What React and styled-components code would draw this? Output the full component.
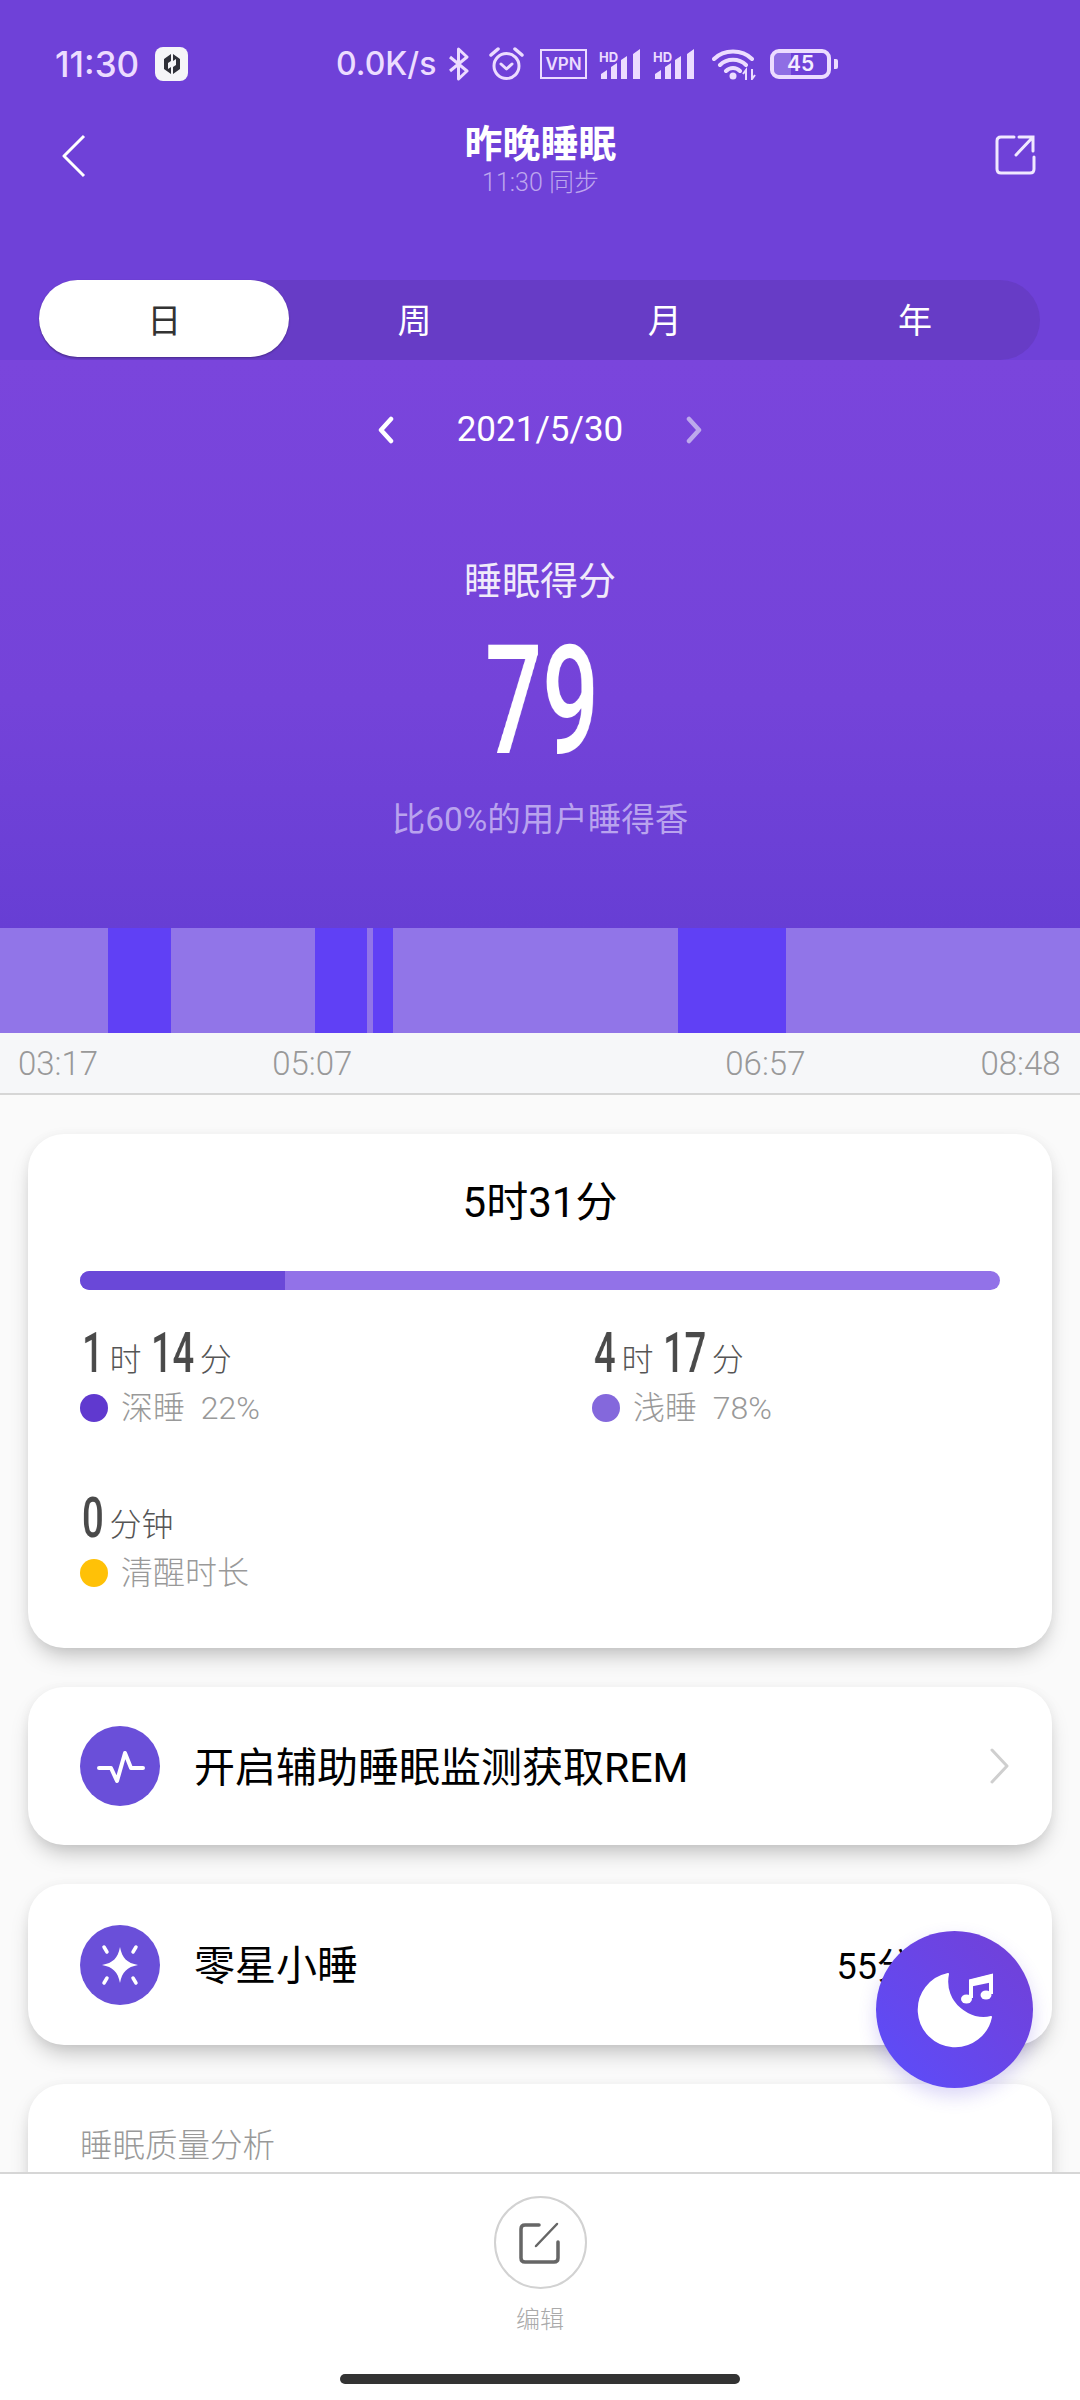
import React from 'react';
import styled, { createGlobalStyle } from 'styled-components';

const GlobalStyle = createGlobalStyle`
  html, body {
    margin: 0;
    padding: 0;
    background: #fafafa;
  }
  * {
    box-sizing: border-box;
  }
`;

const SANS = `Roboto, "Noto Sans CJK SC", sans-serif`;
const STATUS = `Inter, "Noto Sans CJK SC", sans-serif`;
const STATUS_COLOR = '#ecdcff';

const Page = styled.div`
  position: relative;
  width: 1080px;
  height: 2400px;
  display: flex;
  flex-direction: column;
  overflow: hidden;
  font-family: ${SANS};
  background: #fafafa;
`;

const TopBand = styled.div`
  height: 360px;
  flex: none;
  background: #6f41d8;
  display: flex;
  flex-direction: column;
`;

const StatusBar = styled.div`
  height: 34px;
  margin-top: 47px;
  padding-left: 55px;
  display: flex;
  align-items: center;
  font-family: ${STATUS};
  color: ${STATUS_COLOR};
`;

const Clock = styled.span`
  width: 100px;
  font-size: 35px;
  font-weight: 500;
  line-height: 34px;
`;

const AppBadge = styled.div`
  width: 33px;
  height: 34px;
  border-radius: 8px;
  background: #f5f5f8;
  display: flex;
  align-items: center;
  justify-content: center;
`;

const Speed = styled.span`
  margin-left: 148px;
  width: 112px;
  font-size: 32px;
  font-weight: 500;
  line-height: 34px;
`;

const StatusIcon = styled.svg`
  flex: none;
  margin-left: ${(p) => p.$gap || 0}px;
`;

const VpnBox = styled.div`
  width: 47px;
  height: 30px;
  margin-left: 16px;
  border: 2px solid ${STATUS_COLOR};
  display: flex;
  align-items: center;
  justify-content: center;
  font-size: 17px;
  font-weight: 600;
`;

const Battery = styled.div`
  position: relative;
  width: 61px;
  height: 30px;
  margin-left: 14px;
  border: 4px solid ${STATUS_COLOR};
  border-radius: 9px;
  display: flex;
  align-items: center;
  justify-content: center;
  font-size: 21px;
  font-weight: 600;
  line-height: 22px;
  background: linear-gradient(90deg, #8f6ee4 0, #8f6ee4 32%, transparent 32%);
  background-clip: padding-box;
  color: #f4ecff;
`;

const BatteryNub = styled.div`
  width: 4px;
  height: 10px;
  margin-left: 3px;
  border-radius: 0 2px 2px 0;
  background: ${STATUS_COLOR};
`;

const NavBar = styled.div`
  height: 80px;
  margin-top: 39px;
  padding: 14px 43px 0 62px;
  display: flex;
  align-items: flex-start;
  justify-content: space-between;
`;

const NavTitleGroup = styled.div`
  display: flex;
  flex-direction: column;
  align-items: center;
  margin-top: -14px;
`;

const NavTitle = styled.div`
  color: #fff;
  font-size: 38px;
  line-height: 48px;
  font-weight: 700;
`;

const NavSub = styled.div`
  color: #bda6ee;
  font-size: 25px;
  line-height: 30px;
  font-weight: 300;
`;

const TabTrack = styled.div`
  margin: 80px 40px 0 39px;
  height: 80px;
  display: grid;
  grid-template-columns: repeat(4, 1fr);
  border-radius: 40px;
  background: #673cc6;
`;

const Tab = styled.div`
  height: ${(p) => (p.$active ? '77px' : '80px')};
  padding-bottom: ${(p) => (p.$active ? '0' : '3px')};
  border-radius: 40px;
  display: flex;
  align-items: center;
  justify-content: center;
  font-size: 34px;
  color: ${(p) => (p.$active ? '#333' : '#fff')};
  background: ${(p) => (p.$active ? '#fff' : 'transparent')};
  box-shadow: ${(p) => (p.$active ? '0 1px 2px rgba(0, 0, 0, 0.3)' : 'none')};
`;

const ScoreBand = styled.div`
  height: 568px;
  flex: none;
  background: linear-gradient(180deg, #7a45dc 0%, #7443d9 60%, #673ed4 100%);
  display: flex;
  flex-direction: column;
  align-items: center;
`;

const DateRow = styled.div`
  margin-top: 50px;
  height: 40px;
  display: flex;
  align-items: center;
  color: #fff;
  font-size: 35px;
`;

const DateText = styled.span`
  margin: 0 62px;
  line-height: 40px;
`;

const ScoreLabel = styled.div`
  margin-top: 107px;
  color: #f0eafa;
  font-size: 38px;
  line-height: 48px;
`;

const Condensed = styled.span`
  display: inline-block;
  width: ${(p) => p.$n * p.$unit}em;
  transform: scaleX(${(p) => p.$scale});
  transform-origin: left center;
  white-space: nowrap;
  font-family: Roboto, sans-serif;
  will-change: transform;
`;

const ScoreValue = styled.div`
  margin-top: 21px;
  height: 150px;
  color: #fff;
  font-size: 152px;
  line-height: 150px;
  font-weight: 500;
`;

const ScoreCompare = styled.div`
  margin-top: 22px;
  color: #b9a3ee;
  font-size: 33.5px;
  line-height: 44px;
`;

const Chart = styled.div`
  height: 105px;
  flex: none;
  display: flex;
`;

const ChartSegment = styled.div`
  width: ${(p) => p.$w}px;
  flex: ${(p) => (p.$grow ? '1' : 'none')};
  background: ${(p) => (p.$deep ? '#6040f5' : '#9175e8')};
`;

const TimeAxis = styled.div`
  height: 62px;
  flex: none;
  padding: 0 18px;
  display: flex;
  align-items: center;
  background: #f6f7f9;
  border-bottom: 2px solid #d6d6d6;
`;

const TimeLabel = styled.span`
  margin-left: ${(p) => p.$gap || 0}px;
  font-size: 33px;
  font-weight: 300;
  color: #999;
`;

const Scroller = styled.div`
  flex: 1;
  min-height: 0;
  overflow: hidden;
  padding: 39px 28px 0;
  display: flex;
  flex-direction: column;
  gap: 39px;
  background: #fafafa;
`;

const Card = styled.div`
  flex: none;
  height: ${(p) => p.$h}px;
  border-radius: 36px;
  background: #fff;
  box-shadow: 0 12px 22px -6px rgba(0, 0, 0, 0.26), 0 0 12px rgba(0, 0, 0, 0.04);
`;

const SummaryCard = styled(Card)`
  padding: 45px 52px 0;
`;

const TotalTime = styled.div`
  text-align: center;
  color: #000;
  font-size: 42px;
  line-height: 48px;
`;

const StageBar = styled.div`
  margin-top: 44px;
  height: 19px;
  border-radius: 10px;
  overflow: hidden;
  background: #9272e8;
`;

const StageFill = styled.div`
  width: ${(p) => p.$w}px;
  height: 100%;
  background: #6a48d8;
`;

const StatGrid = styled.div`
  margin-top: 32px;
  display: grid;
  grid-template-columns: 512px 1fr;
  row-gap: 61px;
`;

const Stat = styled.div`
  display: flex;
  flex-direction: column;
`;

const StatValue = styled.div`
  height: 62px;
  display: flex;
  align-items: flex-end;
  color: #4a4a4a;
`;

const StatNumber = styled.div`
  font-size: 56px;
  line-height: 62px;
  font-weight: 500;
  margin-left: ${(p) => p.$gap || 2}px;
`;

const StatUnit = styled.span`
  margin-left: ${(p) => p.$gap || 6}px;
  font-size: 32px;
  line-height: 48px;
  color: #555;
  font-weight: 300;
`;

const StatLegend = styled.div`
  margin-top: 6px;
  display: flex;
  align-items: center;
  gap: 13px;
  color: #999;
  font-size: 32px;
  line-height: 36px;
  font-weight: 300;
  word-spacing: 8px;
`;

const LegendDot = styled.span`
  width: 28px;
  height: 28px;
  border-radius: 50%;
  background: ${(p) => p.$color};
`;

const RowCard = styled(Card)`
  padding: 0 42px 0 52px;
  display: flex;
  align-items: center;
`;

const RowIcon = styled.div`
  width: 80px;
  height: 80px;
  flex: none;
  border-radius: 50%;
  background: #6a4fd9;
  display: flex;
  align-items: center;
  justify-content: center;
`;

const RowText = styled.span`
  flex: 1;
  margin-left: 34px;
  padding-bottom: 5px;
  color: #000;
  font-size: 41px;
`;

const RowValue = styled.span`
  color: #000;
  font-size: 36px;
  margin-right: 61px;
  padding-bottom: 3px;
`;

const SectionCard = styled(Card)`
  padding: 40px 52px 0;
`;

const SectionTitle = styled.div`
  color: #999;
  font-size: 32.5px;
  line-height: 44px;
  font-weight: 300;
`;

const Fab = styled.div`
  position: absolute;
  left: 876px;
  top: 1931px;
  width: 157px;
  height: 157px;
  border-radius: 50%;
  background: linear-gradient(45deg, #5a4dfb 0%, #6a45e6 55%, #7240d6 100%);
  box-shadow: 0 8px 18px rgba(90, 70, 220, 0.22);
`;

const BottomBar = styled.div`
  height: 228px;
  flex: none;
  border-top: 2px solid #d6d6d6;
  background: #fff;
  display: flex;
  flex-direction: column;
  align-items: center;
  padding-top: 22px;
`;

const EditCircle = styled.div`
  width: 93px;
  height: 93px;
  border-radius: 50%;
  border: 2px solid #d2d2d2;
  display: flex;
  align-items: center;
  justify-content: center;
`;

const EditLabel = styled.div`
  margin-top: 15px;
  color: #aaa;
  font-size: 24px;
  line-height: 32px;
  font-weight: 300;
`;

const HomeBar = styled.div`
  margin-top: 38px;
  width: 400px;
  height: 10px;
  border-radius: 5px;
  background: #333;
`;

const HdSignal = ({ gap }) => (
  <StatusIcon $gap={gap} width="43" height="32" viewBox="0 0 43 32">
    <text x="0" y="14" fontFamily="Inter, sans-serif" fontSize="13" fontWeight="700" fill={STATUS_COLOR}>HD</text>
    <path d="M2 31V26L8 22V31ZM12 31V19L18 15V31ZM22 31V12L28 8V31ZM34 31V6L41 1V31Z" fill={STATUS_COLOR} />
  </StatusIcon>
);

const TABS = ['日', '周', '月', '年'];
const SEGMENTS = [
  { w: 108 },
  { w: 63, deep: true },
  { w: 144 },
  { w: 52, deep: true },
  { w: 6 },
  { w: 20, deep: true },
  { w: 285 },
  { w: 108, deep: true },
  { grow: true },
];

const App = () => (
  <Page>
    <GlobalStyle />
    <TopBand>
      <StatusBar>
        <Clock>11:30</Clock>
        <AppBadge>
          <svg width="20" height="24" viewBox="0 0 20 24">
            <path d="M9 2V9L6 11V17L9 15V22L2 17V7ZM11 2L18 7V17L11 22V15L14 13V7L11 9Z" fill="#2f3038" />
          </svg>
        </AppBadge>
        <Speed>0.0K/s</Speed>
        <StatusIcon width="22" height="34" viewBox="0 0 22 34">
          <path d="M2 10L19 24L10.5 32V2L19 10L2 24" fill="none" stroke={STATUS_COLOR} strokeWidth="3" strokeLinejoin="round" />
        </StatusIcon>
        <StatusIcon $gap={19} width="35" height="34" viewBox="0 0 35 34">
          <circle cx="17.5" cy="19" r="12.5" fill="none" stroke={STATUS_COLOR} strokeWidth="3" />
          <path d="M12 17L17.5 22L23 17" fill="none" stroke={STATUS_COLOR} strokeWidth="3" strokeLinecap="round" strokeLinejoin="round" />
          <path d="M2 8L9 2M33 8L26 2" fill="none" stroke={STATUS_COLOR} strokeWidth="3.5" strokeLinecap="round" />
        </StatusIcon>
        <VpnBox>VPN</VpnBox>
        <HdSignal gap={12} />
        <HdSignal gap={11} />
        <StatusIcon $gap={16} width="44" height="32" viewBox="0 0 44 32">
          <path d="M2 11C12 1 30 1 40 11M8 17C15 10 27 10 34 17M14 23C18 19 24 19 28 23" fill="none" stroke={STATUS_COLOR} strokeWidth="4" strokeLinecap="round" />
          <circle cx="21" cy="28" r="3.5" fill={STATUS_COLOR} />
          <path d="M34 32V22L31 26M40 21V31L43 27" fill="none" stroke={STATUS_COLOR} strokeWidth="2" />
        </StatusIcon>
        <Battery>45</Battery>
        <BatteryNub />
      </StatusBar>
      <NavBar>
        <svg width="24" height="44" viewBox="0 0 24 44">
          <path d="M22 2L2 22L22 42" fill="none" stroke="#fff" strokeWidth="3" strokeLinejoin="round" />
        </svg>
        <NavTitleGroup>
          <NavTitle>昨晚睡眠</NavTitle>
          <NavSub>11:30 同步</NavSub>
        </NavTitleGroup>
        <svg width="42" height="42" viewBox="0 0 42 42">
          <path d="M19 3H6Q2 3 2 7V35Q2 39 6 39H35Q39 39 39 35V23" fill="none" stroke="#f0e8ff" strokeWidth="3" strokeLinecap="round" />
          <path d="M21 21L38 3M24 3H38V17" fill="none" stroke="#f0e8ff" strokeWidth="3" strokeLinecap="round" />
        </svg>
      </NavBar>
      <TabTrack>
        {TABS.map((t, i) => (
          <Tab key={t} $active={i === 0}>{t}</Tab>
        ))}
      </TabTrack>
    </TopBand>

    <ScoreBand>
      <DateRow>
        <svg width="18" height="28" viewBox="0 0 18 28">
          <path d="M14 3L4 14L14 25" fill="none" stroke="#fff" strokeWidth="4.5" strokeLinecap="round" strokeLinejoin="round" />
        </svg>
        <DateText>2021/5/30</DateText>
        <svg width="18" height="28" viewBox="0 0 18 28">
          <path d="M4 3L14 14L4 25" fill="none" stroke="#bda9ec" strokeWidth="4.5" strokeLinecap="round" strokeLinejoin="round" />
        </svg>
      </DateRow>
      <ScoreLabel>睡眠得分</ScoreLabel>
      <ScoreValue>
        <Condensed $n={2} $unit={0.36} $scale={0.66}>79</Condensed>
      </ScoreValue>
      <ScoreCompare>比60%的用户睡得香</ScoreCompare>
    </ScoreBand>

    <Chart>
      {SEGMENTS.map((s, i) => (
        <ChartSegment key={i} $w={s.w} $deep={s.deep} $grow={s.grow} />
      ))}
    </Chart>
    <TimeAxis>
      <TimeLabel>03:17</TimeLabel>
      <TimeLabel $gap={174}>05:07</TimeLabel>
      <TimeLabel $gap={373}>06:57</TimeLabel>
      <TimeLabel $gap={175}>08:48</TimeLabel>
    </TimeAxis>

    <Scroller>
      <SummaryCard $h={514}>
        <TotalTime>5时31分</TotalTime>
        <StageBar>
          <StageFill $w={205} />
        </StageBar>
        <StatGrid>
          <Stat>
            <StatValue>
              <StatNumber><Condensed $n={1} $unit={0.385} $scale={0.68}>1</Condensed></StatNumber>
              <StatUnit>时</StatUnit>
              <StatNumber $gap={9}><Condensed $n={2} $unit={0.385} $scale={0.68}>14</Condensed></StatNumber>
              <StatUnit>分</StatUnit>
            </StatValue>
            <StatLegend><LegendDot $color="#6039cf" />深睡 22%</StatLegend>
          </Stat>
          <Stat>
            <StatValue>
              <StatNumber><Condensed $n={1} $unit={0.385} $scale={0.68}>4</Condensed></StatNumber>
              <StatUnit>时</StatUnit>
              <StatNumber $gap={9}><Condensed $n={2} $unit={0.385} $scale={0.68}>17</Condensed></StatNumber>
              <StatUnit>分</StatUnit>
            </StatValue>
            <StatLegend><LegendDot $color="#8468dc" />浅睡 78%</StatLegend>
          </Stat>
          <Stat>
            <StatValue>
              <StatNumber><Condensed $n={1} $unit={0.385} $scale={0.68}>0</Condensed></StatNumber>
              <StatUnit>分钟</StatUnit>
            </StatValue>
            <StatLegend><LegendDot $color="#ffc107" />清醒时长</StatLegend>
          </Stat>
        </StatGrid>
      </SummaryCard>

      <RowCard $h={158}>
        <RowIcon>
          <svg width="80" height="80" viewBox="0 0 80 80">
            <path d="M19 42H31L37 55L45 27L51 42H63" fill="none" stroke="#fff" strokeWidth="4" strokeLinecap="round" strokeLinejoin="round" />
          </svg>
        </RowIcon>
        <RowText>开启辅助睡眠监测获取REM</RowText>
        <svg width="20" height="36" viewBox="0 0 20 36">
          <path d="M2 2L17 18L2 34" fill="none" stroke="#cfcfcf" strokeWidth="3" strokeLinecap="round" strokeLinejoin="round" />
        </svg>
      </RowCard>

      <RowCard $h={161}>
        <RowIcon>
          <svg width="80" height="80" viewBox="0 0 80 80">
            <path d="M40 22C42 33 47 38 58 40C47 42 42 47 40 58C38 47 33 42 22 40C33 38 38 33 40 22Z" fill="#fff" />
            <path d="M24 22L27 27M56 22L53 27M24 58L27 53M56 58L53 53" stroke="#fff" strokeWidth="3.5" strokeLinecap="round" />
          </svg>
        </RowIcon>
        <RowText>零星小睡</RowText>
        <RowValue>55分钟</RowValue>
      </RowCard>

      <SectionCard $h={300}>
        <SectionTitle>睡眠质量分析</SectionTitle>
      </SectionCard>
    </Scroller>

    <Fab>
      <svg width="157" height="157" viewBox="0 0 157 157">
        <path d="M72 43A36.5 36.5 0 1 0 115 86C95 92 66 72 72 43Z" fill="#fff" stroke="#fff" strokeWidth="2" strokeLinejoin="round" />
        <path d="M95 67V50L115 45V63" fill="none" stroke="#fff" strokeWidth="4" />
        <path d="M93 49L117 43V51L93 56Z" fill="#fff" />
        <ellipse cx="90.5" cy="68" rx="5.5" ry="4.5" fill="#fff" />
        <ellipse cx="110" cy="64" rx="5.5" ry="4.5" fill="#fff" />
      </svg>
    </Fab>

    <BottomBar>
      <EditCircle>
        <svg width="42" height="42" viewBox="0 0 42 42">
          <path d="M20 3H6Q2 3 2 7V36Q2 40 6 40H35Q39 40 39 36V20" fill="none" stroke="#666" strokeWidth="3.5" strokeLinecap="round" />
          <path d="M17 24L38 2" fill="none" stroke="#666" strokeWidth="2.5" strokeLinecap="round" />
        </svg>
      </EditCircle>
      <EditLabel>编辑</EditLabel>
      <HomeBar />
    </BottomBar>
  </Page>
);

export default App;
